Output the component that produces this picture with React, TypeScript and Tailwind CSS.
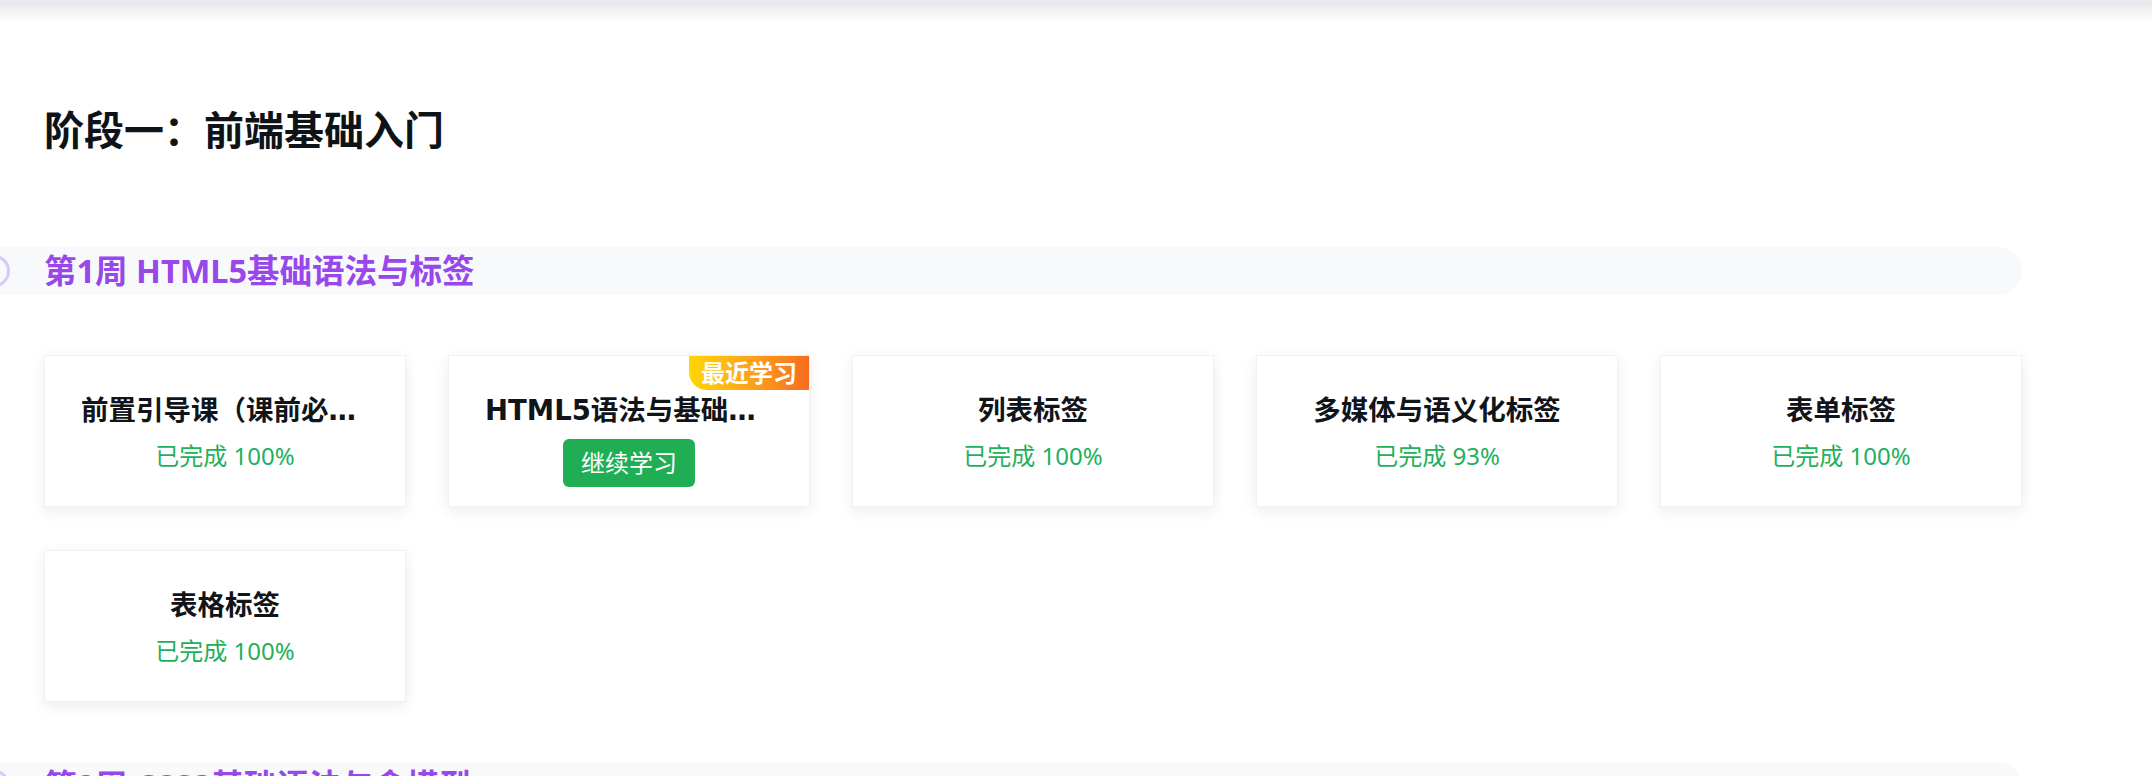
import React from 'react';

type Lesson = {
  title: string;
  progress: number;
  recent?: boolean;
};

const WEEK1: Lesson[] = [
  { title: '前置引导课（课前必看内容）', progress: 100 },
  { title: 'HTML5语法与基础结构', progress: 100, recent: true },
  { title: '列表标签', progress: 100 },
  { title: '多媒体与语义化标签', progress: 93 },
  { title: '表单标签', progress: 100 },
  { title: '表格标签', progress: 100 },
];

const FONT = "font-['Noto_Sans','Noto_Sans_CJK_SC',sans-serif]";

const WeekBar: React.FC<{ label: string }> = ({ label }) => (
  <div className="relative -ml-[44px] pl-[44px] h-[48px] flex items-center bg-[#f8f9fb] rounded-r-full">
    <span className="absolute left-[-23px] top-1/2 -translate-y-1/2 w-[33px] h-[33px] rounded-full border-[3px] border-[#dcc6fb]" />
    <h3 className="text-[32.5px] leading-[48px] font-bold text-[#9747ea] whitespace-nowrap">{label}</h3>
  </div>
);

const LessonCard: React.FC<{ lesson: Lesson }> = ({ lesson }) => (
  <div className="relative h-[152px] bg-white border border-[#f1f1f1] shadow-[0_4px_14px_rgba(0,0,0,0.08)] px-[36px] pt-[34px] flex flex-col items-center">
    {lesson.recent && (
      <span className="absolute top-0 right-0 w-[120px] h-[34px] flex items-center justify-center rounded-bl-[18px] bg-gradient-to-r from-[#fdd700] to-[#f66b1f] text-white text-[24px] leading-[34px] font-bold">
        最近学习
      </span>
    )}
    <div className="w-full text-center font-['DejaVu_Sans','Noto_Sans_CJK_SC',sans-serif] text-[27.5px] leading-[40px] font-bold text-[#111418] truncate">
      {lesson.title}
    </div>
    {lesson.recent ? (
      <button className="mt-[9px] w-[132px] h-[48px] rounded-[6px] bg-[#1fae54] text-white text-[24px] leading-[48px]">继续学习</button>
    ) : (
      <div className="mt-[8px] text-[24px] leading-[36px] text-[#22b05b]">已完成 {lesson.progress}%</div>
    )}
  </div>
);

export default function App() {
  return (
    <div className={`${FONT} relative w-full h-[776px] overflow-hidden bg-white`}>
      <div className="h-[22px] border-t-2 border-[#ebe7f6] bg-gradient-to-b from-[#e6e6e8] to-white" />
      <div className="pl-[44px] pr-[130px] pt-[80px]">
        <h1 className="text-[40px] leading-[56px] font-bold text-[#0e1318]">阶段一：前端基础入门</h1>

        <section className="mt-[89px]">
          <WeekBar label="第1周 HTML5基础语法与标签" />
          <div className="mt-[60px] grid grid-cols-5 gap-x-[42px] gap-y-[43px]">
            {WEEK1.map((l) => (
              <LessonCard key={l.title} lesson={l} />
            ))}
          </div>
        </section>

        <section className="mt-[60px]">
          <WeekBar label="第2周 CSS3基础语法与盒模型" />
        </section>
      </div>
    </div>
  );
}
